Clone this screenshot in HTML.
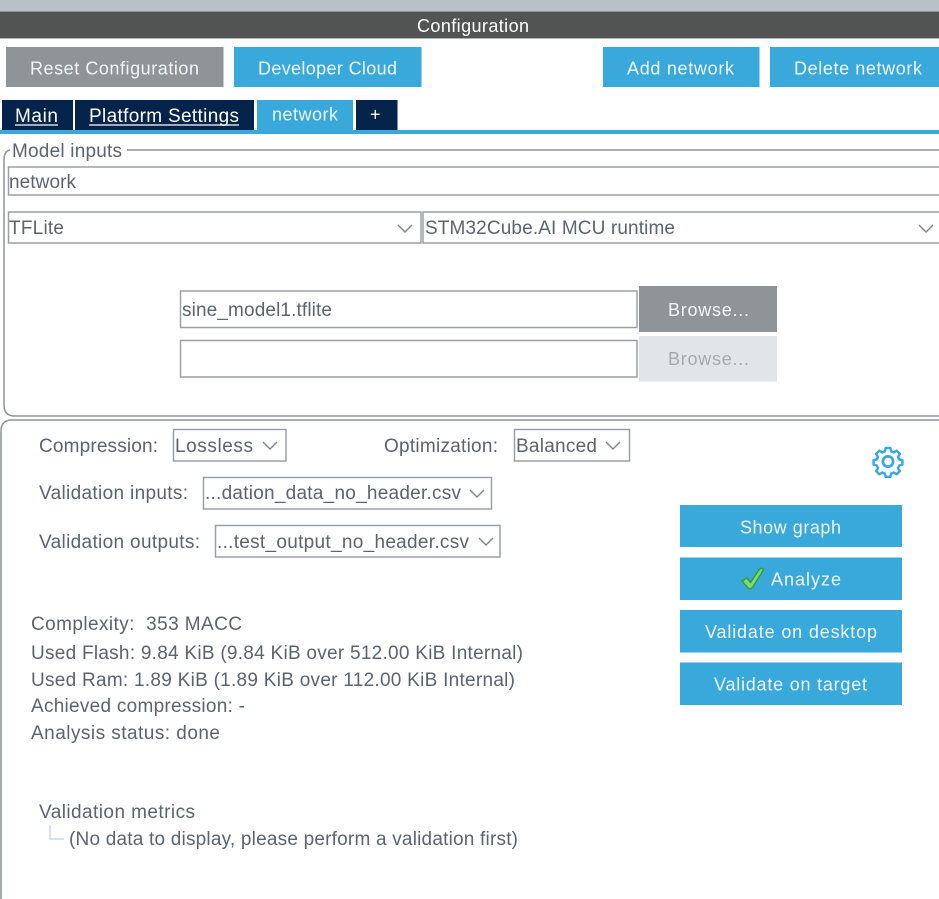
<!DOCTYPE html>
<html><head><meta charset="utf-8"><style>
html,body{margin:0;padding:0;background:#fff;width:939px;height:899px;overflow:hidden}
svg{display:block;filter:blur(.35px)}
text{font-family:"Liberation Sans",sans-serif;font-size:19px;fill:#5c646d;white-space:pre}
.w{fill:#eef6fb;font-size:18px}
.b{fill:#fff;font-size:18px}
.t{fill:#fff;font-size:19px}
.r{fill:none;stroke:#9aa0a6;stroke-width:1.5}
.c{fill:none;stroke:#8d9399;stroke-width:1.5}
.u{stroke:#fff;stroke-width:1.2}
</style></head><body>
<svg width="939" height="899" viewBox="0 0 939 899" xmlns="http://www.w3.org/2000/svg">
<rect x="0" y="0" width="939" height="11" fill="#b7c1c7"/>
<rect x="0" y="11" width="939" height="1.5" fill="#8f9498"/>
<rect x="0" y="12" width="939" height="26" fill="#525453"/>
<rect x="0" y="38" width="939" height="1" fill="#b0b4b6"/>
<text class="b" x="417" y="32" textLength="112">Configuration</text>

<rect x="6" y="47" width="217.500" height="40" fill="#8f9498"/>
<text class="w" x="30" y="74.500" textLength="169">Reset Configuration</text>
<rect x="234" y="47" width="187.500" height="40" fill="#39a9dc"/>
<text class="w" x="258" y="74.500" textLength="139">Developer Cloud</text>
<rect x="603" y="47" width="156.500" height="40" fill="#39a9dc"/>
<text class="w" x="627" y="74.500" textLength="107">Add network</text>
<rect x="770" y="47" width="169" height="40" fill="#39a9dc"/>
<text class="w" x="794" y="74.500" textLength="128">Delete network</text>

<rect x="2" y="100" width="71" height="31" fill="#03234b"/>
<rect x="75" y="100" width="179" height="31" fill="#03234b"/>
<rect x="257" y="100" width="96" height="31" fill="#39a9dc"/>
<rect x="356" y="100" width="41.500" height="31" fill="#03234b"/>
<rect x="0" y="130" width="939" height="4" fill="#39a9dc"/>
<text class="t" x="15" y="122" textLength="43">Main</text>
<line class="u" x1="15" y1="125" x2="58" y2="125"/>
<text class="t" x="89" y="122" textLength="150">Platform Settings</text>
<line class="u" x1="89" y1="125" x2="239" y2="125"/>
<text class="w" x="272" y="120.500" textLength="66">network</text>
<text class="b" x="370" y="120.500">+</text>

<path class="c" d="M939 150H127M10 150Q4 151 4 160V405Q4 416 15 416H939"/>
<text x="12" y="157" textLength="110">Model inputs</text>
<rect class="r" x="8.500" y="167" width="940" height="28"/>
<text x="9" y="188" textLength="67">network</text>
<rect class="r" x="8.500" y="212" width="412.500" height="31"/>
<text x="9" y="234" textLength="55">TFLite</text>
<path d="M398 225l7 7 7-7" fill="none" stroke="#7d848b" stroke-width="1.4"/>
<rect class="r" x="423" y="212" width="530" height="31"/>
<text x="425" y="234" textLength="250">STM32Cube.AI MCU runtime</text>
<path d="M919 225l7 7 7-7" fill="none" stroke="#7d848b" stroke-width="1.4"/>

<rect class="r" x="180.500" y="291" width="456.500" height="36.500"/>
<text x="182" y="316" textLength="150">sine_model1.tflite</text>
<rect x="639" y="286" width="138" height="46" fill="#8f9498"/>
<text class="w" x="668" y="316" textLength="81">Browse...</text>
<rect class="r" x="180.500" y="340.500" width="456.500" height="36.500"/>
<rect x="639" y="336" width="138" height="45.500" fill="#e2e5e8"/>
<text x="668" y="365" textLength="81" style="fill:#a5aaaf;font-size:18px">Browse...</text>

<path class="c" d="M1 899V431Q1 420 12 420H939"/>

<text x="39" y="452" textLength="119">Compression:</text>
<rect class="r" x="173.500" y="429.500" width="112.500" height="31.500"/>
<text x="175" y="452" textLength="78">Lossless</text>
<path d="M263 442l7 7 7-7" fill="none" stroke="#7d848b" stroke-width="1.4"/>
<text x="384" y="452" textLength="114">Optimization:</text>
<rect class="r" x="514.500" y="429.500" width="115" height="31.500"/>
<text x="516" y="452" textLength="81">Balanced</text>
<path d="M606 442l7 7 7-7" fill="none" stroke="#7d848b" stroke-width="1.4"/>

<text x="39" y="499" textLength="149">Validation inputs:</text>
<rect class="r" x="203.500" y="477.500" width="288" height="31.500"/>
<text x="205" y="499" textLength="256">...dation_data_no_header.csv</text>
<path d="M470 490l7 7 7-7" fill="none" stroke="#7d848b" stroke-width="1.4"/>
<text x="39" y="548" textLength="161">Validation outputs:</text>
<rect class="r" x="215.500" y="525.500" width="284.500" height="31.500"/>
<text x="217" y="548" textLength="252">...test_output_no_header.csv</text>
<path d="M479 538l7 7 7-7" fill="none" stroke="#7d848b" stroke-width="1.4"/>

<g transform="translate(888 461.500) scale(.93)" fill="none" stroke="#39a9dc">
<circle r="5.500" stroke-width="3"/>
<path stroke-width="2.600" stroke-linejoin="round" d="M-2.500-14.500h5l.8 3.600 2.800 1.200 3.200-2 3.500 3.500-2 3.200 1.200 2.800 3.500.7v5l-3.500.8-1.200 2.800 2 3.200-3.500 3.500-3.200-2-2.800 1.200-.8 3.500h-5l-.8-3.500-2.800-1.200-3.200 2-3.500-3.500 2-3.200-1.200-2.800-3.500-.8v-5l3.500-.7 1.200-2.800-2-3.200 3.500-3.500 3.200 2 2.800-1.200z"/>
</g>

<rect x="680" y="505" width="222" height="42" fill="#39a9dc"/>
<text class="w" x="740" y="533.500" textLength="101">Show graph</text>
<rect x="680" y="557.500" width="222" height="42.500" fill="#39a9dc"/>
<path d="M742 581l5-3 3.500 4.500 9-13.500q2.500-1.500 4 1l-11 17.500q-2 2.500-4.500 .5z" fill="#7fd87a" stroke="#2f9e38" stroke-width="1.500" stroke-linejoin="round"/>
<text class="w" x="771" y="585.500" textLength="70">Analyze</text>
<rect x="680" y="610" width="222" height="42.500" fill="#39a9dc"/>
<text class="w" x="705" y="638" textLength="172">Validate on desktop</text>
<rect x="680" y="662.500" width="222" height="42.500" fill="#39a9dc"/>
<text class="w" x="714" y="690.500" textLength="153">Validate on target</text>

<text x="31" y="630" textLength="211">Complexity:  353 MACC</text>
<text x="31" y="659" textLength="492">Used Flash: 9.84 KiB (9.84 KiB over 512.00 KiB Internal)</text>
<text x="31" y="686" textLength="484">Used Ram: 1.89 KiB (1.89 KiB over 112.00 KiB Internal)</text>
<text x="31" y="712" textLength="214">Achieved compression: -</text>
<text x="31" y="739" textLength="189">Analysis status: done</text>

<text x="39" y="818" textLength="156">Validation metrics</text>
<path d="M50 825V839H64" fill="none" stroke="#b9d0e8" stroke-width="1.2"/>
<text x="69" y="845" textLength="449">(No data to display, please perform a validation first)</text>
</svg>
</body></html>
